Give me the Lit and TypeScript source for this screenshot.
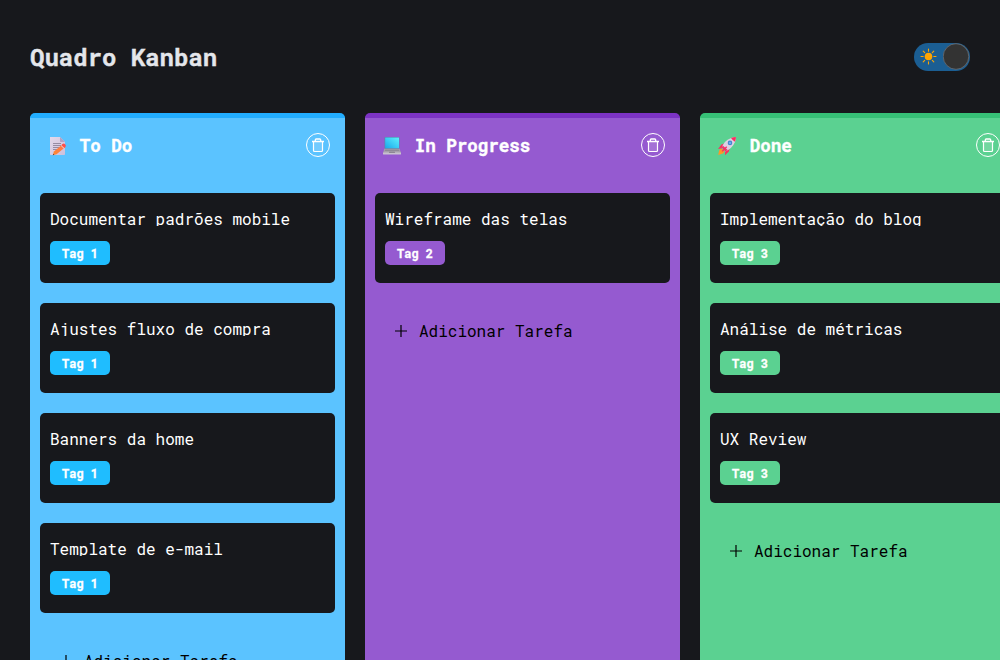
import { LitElement, html, css, svg, TemplateResult } from "lit";
import { customElement, property } from "lit/decorators.js";

interface Column {
  kind: "todo" | "progress" | "done";
  title: string;
  tag: string;
  tasks: string[];
}

const COLUMNS: Column[] = [
  {
    kind: "todo",
    title: "To Do",
    tag: "Tag 1",
    tasks: ["Documentar padrões mobile", "Ajustes fluxo de compra", "Banners da home", "Template de e-mail"],
  },
  { kind: "progress", title: "In Progress", tag: "Tag 2", tasks: ["Wireframe das telas"] },
  {
    kind: "done",
    title: "Done",
    tag: "Tag 3",
    tasks: ["Implementação do blog", "Análise de métricas", "UX Review"],
  },
];

const memo = svg`
  <defs>
    <linearGradient id="paper" x1="0" y1="0" x2="1" y2="1">
      <stop offset="0" stop-color="#e3d9ea"/><stop offset="1" stop-color="#cdbfdb"/>
    </linearGradient>
    <linearGradient id="pencil" x1="1" y1="0" x2="0" y2="1">
      <stop offset="0" stop-color="#ff5a4a"/><stop offset=".3" stop-color="#ff7a45"/><stop offset="1" stop-color="#ff8a30"/>
    </linearGradient>
  </defs>
  <path d="M3 1H13L18 6V18.2a.8.8 0 0 1-.8.8H3.8a.8.8 0 0 1-.8-.8Z" fill="url(#paper)"/>
  <path d="M13 1V5.2a.8.8 0 0 0 .8.8H18Z" fill="#b3a2c5"/>
  <path d="M6 7.5H14M6 9.5H14M6 11.5H12M6 13.5H10" stroke="#8e849b" stroke-width=".9"/>
  <path d="M15.6 8.3l2.9 2.7-9 7.2-3.7 1 1.1-3.7Z" fill="url(#pencil)"/>
  <path d="M14.1 9.6l2.9 2.7" stroke="#e3d9e6" stroke-width="1"/>
  <path d="M15.6 8.1q1.2-1.1 2.5.1t.4 2.6l-1 .9-2.9-2.7Z" fill="#ff4f4a"/>
  <path d="M6.2 17.7l1.2 1.1-1.6.4Z" fill="#59404c"/>`;

const laptop = svg`
  <defs>
    <linearGradient id="screen" x1="0" y1="1" x2="1" y2="0">
      <stop offset="0" stop-color="#1aa8ea"/><stop offset=".5" stop-color="#3ccdf5"/><stop offset="1" stop-color="#5df0fc"/>
    </linearGradient>
  </defs>
  <rect x="2.5" y="1" width="15" height="12" rx=".8" fill="#5a86ac"/>
  <rect x="3.2" y="1.6" width="13.8" height="10.6" fill="url(#screen)"/>
  <path d="M2.4 12.8H17.6L19 17H1Z" fill="#a7a1ad"/>
  <path d="M3.2 13.5H16.8l.5 1.5H2.7Z" fill="#8f8a98"/>
  <rect x="1" y="16.4" width="18" height="2" rx=".5" fill="#c8c1cf"/>
  <path d="M7.3 15.7h5.4l.4 1H6.9Z" fill="#7e7986"/>`;

const rocket = svg`
  <path d="M2 15.2q.2-2 2.4-2.6l3 3q-.8 2.2-3 2.3L1.2 18.9Z" fill="#ff9628"/>
  <path d="M8.3 7.2L4.4 8.5 1 13l5.4-1.1ZM12.6 11.6l-.7 4L8 19.2l.2-5.4Z" fill="#f92f60"/>
  <path d="M4.8 11.8Q7 4.6 13.6 2.2 16.5 1 18.9 1.1q.2 2.6-1 5.2-2.6 6.2-9.7 9.2Z" fill="#dcd0e3"/>
  <path d="M14 2Q16.6 1 18.9 1.1q.1 2.4-.9 4.7Q15.5 4.5 14 2Z" fill="#f92f60"/>
  <path d="M4.8 11.8l1-2.4 4.9 4.7-2.5 1.4Z" fill="#e53b70"/>
  <path d="M9.2 10.2l1 1L5.6 15.8l-1-.9Z" fill="#f92f60"/>
  <circle cx="13" cy="6.9" r="2.3" fill="#4584cc"/>
  <circle cx="13" cy="6.9" r="1.2" fill="#69aef0"/>`;

const ICONS: Record<Column["kind"], TemplateResult> = { todo: memo, progress: laptop, done: rocket };

@customElement("theme-toggle")
export class ThemeToggle extends LitElement {
  static styles = css`
    :host { display: block; }
    .track {
      display: flex; align-items: center; justify-content: space-between;
      box-sizing: border-box; width: 56px; height: 28px; padding: 0 0.5px 0 6px;
      border: 0; border-radius: 14px; background: #1b5e93;
    }
    .sun { display: block; width: 17px; height: 17px; }
    .thumb { display: block; width: 27px; height: 27px; }
  `;

  render() {
    return html`<button class="track" aria-label="Tema">
      <svg class="sun" viewBox="0 0 17 17">
        <circle cx="8.5" cy="8.5" r="3.8" fill="#ffa500" />
        <path d="M8.5 1V3.2M8.5 13.8V16M1 8.5H3.2M13.8 8.5H16M3.2 3.2L4.7 4.7M12.3 12.3L13.8 13.8M3.2 13.8L4.7 12.3M12.3 4.7L13.8 3.2"
          stroke="#ffa500" stroke-width="1.1" stroke-linecap="round" />
      </svg>
      <svg class="thumb" viewBox="0 0 27 27">
        <circle cx="13" cy="13.5" r="12.8" fill="#333" stroke="#6b6f73" stroke-width=".8" />
      </svg>
    </button>`;
  }
}

@customElement("task-card")
export class TaskCard extends LitElement {
  @property() text = "";
  @property() tag = "";
  @property({ reflect: true }) kind = "todo";

  static styles = css`
    :host {
      display: flex; flex-direction: column; align-items: flex-start; gap: 15px;
      box-sizing: border-box; height: 90px; padding: 17px 10px;
      border-radius: 5px; background: #17181c; color: #fff;
    }
    .text { width: 100%; height: 16px; margin: 0; overflow: hidden; font-size: 16px; line-height: 17px; white-space: nowrap; }
    .tag {
      box-sizing: border-box; height: 24px; padding: 0 12px; border-radius: 5px;
      font-size: 12px; font-weight: 700; line-height: 25px; background: #1fbdff;
      -webkit-text-stroke: 0.3px currentColor;
    }
    :host([kind="progress"]) .tag { background: #955ad0; }
    :host([kind="done"]) .tag { background: #5bd191; }
  `;

  render() {
    return html`<p class="text">${this.text}</p><span class="tag">${this.tag}</span>`;
  }
}

@customElement("kanban-column")
export class KanbanColumn extends LitElement {
  @property({ attribute: false }) column!: Column;
  @property({ reflect: true }) kind = "todo";

  static styles = css`
    :host {
      display: block; box-sizing: border-box; flex: none; width: 315px; height: 800px;
      padding: 0 10px; border-top: 5px solid #22adff; border-radius: 5px; background: #5bc3ff;
    }
    :host([kind="progress"]) { background: #955ad0; border-color: #7c33c4; }
    :host([kind="done"]) { background: #5bd191; border-color: #36c076; }
    .head { display: flex; align-items: center; height: 54px; margin-bottom: 21px; padding: 0 5px 0 7px; color: #fff; }
    .emoji { display: block; width: 20px; height: 20px; margin-top: 1px; }
    .name {
      flex: 1; margin: 0 0 0 12.8px; padding-top: 2px; font-size: 17.6px; font-weight: 700; line-height: 24px;
      letter-spacing: -0.06px; -webkit-text-stroke: 0.4px currentColor;
    }
    .delete { display: block; width: 24px; height: 24px; padding: 0; border: 0; background: none; }
    .delete svg { display: block; }
    .list { display: grid; gap: 20px; }
    .add {
      display: flex; align-items: center; gap: 11px; margin-top: 36px; padding: 0 0 0 19px;
      border: 0; background: none; color: #000; font: inherit; font-size: 16px; line-height: 24px;
    }
    .plus { display: block; width: 14px; height: 14px; }
  `;

  render() {
    const c = this.column;
    return html`
      <header class="head">
        <svg class="emoji" viewBox="0 0 20 20">${ICONS[c.kind]}</svg>
        <h2 class="name">${c.title}</h2>
        <button class="delete" aria-label="Excluir coluna">
          <svg width="24" height="24" viewBox="0 0 24 24" fill="none" stroke="#fff">
            <circle cx="12" cy="12" r="11.5" />
            <path d="M7.5 8.5H16.5V17.5Q16.5 18.5 15.5 18.5H8.5Q7.5 18.5 7.5 17.5Z" fill="#fff" fill-opacity=".14" stroke-width="1.2" />
            <path d="M6 8.5H18M9.3 8V6.9Q9.3 6 10.2 6H13.8Q14.7 6 14.7 6.9V8" stroke-width="1.3" />
          </svg>
        </button>
      </header>
      <div class="list">
        ${c.tasks.map((t) => html`<task-card .text=${t} .tag=${c.tag} kind=${c.kind}></task-card>`)}
      </div>
      <button class="add">
        <svg class="plus" viewBox="0 0 14 14"><path d="M7 1V13M1 7H13" stroke="#000" stroke-width="1.2" /></svg>
        <span>Adicionar Tarefa</span>
      </button>
    `;
  }
}

@customElement("app-root")
export class AppRoot extends LitElement {
  static styles = css`
    :host {
      display: block; box-sizing: border-box; width: 100%; height: 100vh; overflow: hidden;
      padding: 0 30px; background: #17181c;
      font-family: "Roboto Mono", "DejaVu Sans Mono", monospace;
    }
    .top { display: flex; align-items: center; justify-content: space-between; height: 113px; }
    .title {
      margin: 0; color: #e4e6eb; font-size: 24px; font-weight: 700; line-height: 32px;
      -webkit-text-stroke: 0.4px currentColor;
    }
    .board { display: flex; align-items: flex-start; gap: 20px; }
  `;

  render() {
    return html`
      <header class="top"><h1 class="title">Quadro Kanban</h1><theme-toggle></theme-toggle></header>
      <main class="board">
        ${COLUMNS.map((c) => html`<kanban-column .column=${c} kind=${c.kind}></kanban-column>`)}
      </main>
    `;
  }
}
